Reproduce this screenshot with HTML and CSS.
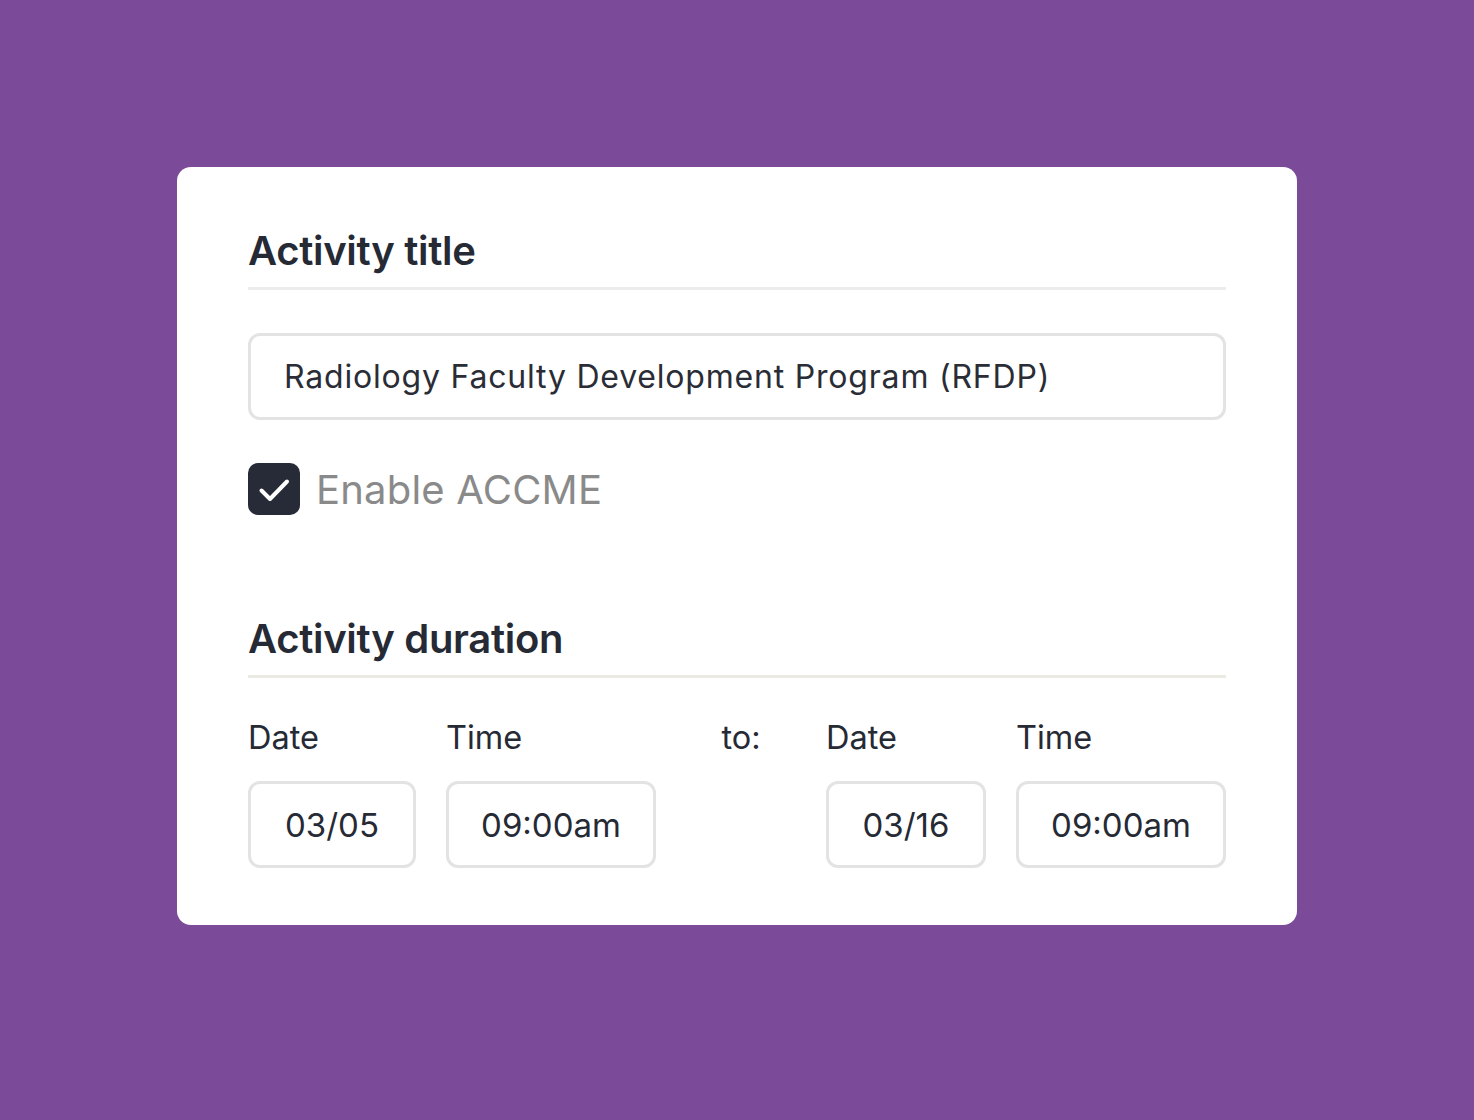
FILE: index.html
```html
<!DOCTYPE html>
<html>
<head>
    <title>Activity settings</title>
    <link rel="stylesheet" href="styles.css">
</head>
<body>
    <div class="card">
        <h2 class="section-title">Activity title</h2>
        <div class="text-field">Radiology Faculty Development Program (RFDP)</div>

        <label class="check-row">
            <span class="check-box">
                <svg width="52" height="52" viewBox="0 0 52 52">
                    <path d="M13.5 27.5 L22 36 L39 18.5" fill="none" stroke="#ffffff" stroke-width="4" stroke-linecap="round" stroke-linejoin="round"/>
                </svg>
            </span>
            <span class="check-label">Enable ACCME</span>
        </label>

        <h2 class="section-title duration-title">Activity duration</h2>
        <div class="duration-grid">
            <div class="field-label">Date</div>
            <div class="field-label">Time</div>
            <div class="field-label to-label">to:</div>
            <div class="field-label">Date</div>
            <div class="field-label">Time</div>

            <div class="small-field">03/05</div>
            <div class="small-field">09:00am</div>
            <div></div>
            <div class="small-field">03/16</div>
            <div class="small-field">09:00am</div>
        </div>
    </div>
</body>
</html>
```

FILE: styles.css
```css
body {
    font-family: Inter, 'Noto Sans', sans-serif;
    background: #7b4a98;
    margin: 0;
    padding-top: 167px;
    min-height: 100vh;
    box-sizing: border-box;
}

.card {
    background: #ffffff;
    width: 1120px;
    margin: 0 auto;
    box-sizing: border-box;
    padding: 60px 71px 57px 71px;
    border-radius: 14px;
    color: #262a35;
}

.section-title {
    margin: 0;
    font-size: 40px;
    line-height: 48px;
    font-weight: 600;
    letter-spacing: -0.3px;
    padding-bottom: 12px;
    border-bottom: 3px solid #ececec;
}

.text-field {
    margin-top: 43px;
    height: 87px;
    box-sizing: border-box;
    border: 3px solid #e3e3e3;
    border-radius: 12px;
    display: flex;
    align-items: center;
    padding: 0 33px;
    font-size: 32px;
    letter-spacing: 0.8px;
    color: #2a2d36;
}

.check-row {
    margin-top: 43px;
    display: flex;
    align-items: center;
    gap: 16px;
}

.check-box {
    width: 52px;
    height: 52px;
    border-radius: 10px;
    background: #272b38;
    display: flex;
    align-items: center;
    justify-content: center;
}

.check-label {
    font-size: 40px;
    letter-spacing: 0.2px;
    color: #8a8a8a;
}

.duration-title {
    margin-top: 100px;
    border-bottom-color: #ebebe3;
}

.duration-grid {
    margin-top: 40px;
    display: grid;
    grid-template-columns: 168px 210px 1fr 160px 210px;
    column-gap: 30px;
    row-gap: 23px;
}

.field-label {
    font-size: 32.5px;
    line-height: 40px;
    color: #262a35;
}

.to-label {
    text-align: center;
}

.small-field {
    height: 87px;
    box-sizing: border-box;
    border: 3px solid #e3e3e3;
    border-radius: 12px;
    display: flex;
    align-items: center;
    justify-content: center;
    font-size: 33px;
    color: #262a35;
}
```
